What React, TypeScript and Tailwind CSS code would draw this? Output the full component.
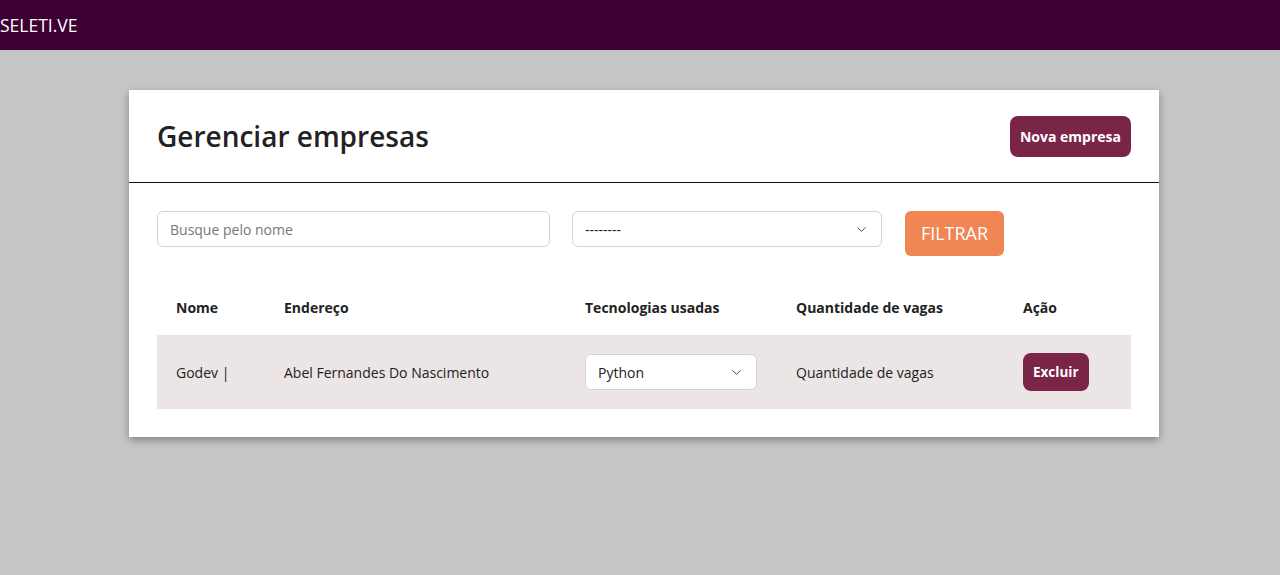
import { ChevronDown } from "lucide-react";

const font = { fontFamily: '"Open Sans", "Noto Sans", sans-serif' };

function Navbar() {
  return (
    <header className="flex h-[50px] items-center bg-[#3c0034]">
      <span className="text-[17.5px] text-white">SELETI.VE</span>
    </header>
  );
}

function FakeSelect({ value, className }: { value: string; className: string }) {
  return (
    <div
      className={`flex h-9 items-center justify-between rounded-md border border-[#d4d4d4] bg-white pl-3 pr-3 text-[14px] text-[#222] ${className}`}
    >
      <span>{value}</span>
      <ChevronDown size={15} strokeWidth={1.6} className="text-[#444]" />
    </div>
  );
}

export default function App() {
  return (
    <div className="min-h-[575px] bg-[#c6c6c6]" style={font}>
      <Navbar />

      <main className="pl-[129px] pt-[40px]">
        <div className="w-[1030px] bg-white shadow-[0_3px_8px_rgba(0,0,0,0.35)]">
          <div className="flex h-[93px] items-center justify-between border-b border-[#111] px-7">
            <h1 className="text-[28px] font-semibold text-[#222]">Gerenciar empresas</h1>
            <button className="h-[41px] rounded-lg bg-[#7a2547] px-[10px] text-[14px] font-bold text-white">
              Nova empresa
            </button>
          </div>

          <div className="px-7 pb-7 pt-[28px]">
            <div className="flex items-start">
              <input
                placeholder="Busque pelo nome"
                className="h-9 w-[393px] rounded-md border border-[#d4d4d4] px-3 text-[14px] text-[#222] placeholder:text-[#777] outline-none"
              />
              <FakeSelect value="--------" className="ml-[22px] w-[310px]" />
              <button className="ml-[23px] h-[45px] w-[99px] rounded-md bg-[#ef8654] text-[18px] text-white">
                FILTRAR
              </button>
            </div>

            <table className="mt-6 w-[974px] border-collapse text-left text-[14px] text-[#222]">
              <thead>
                <tr className="h-[55px]">
                  <th className="w-[108px] pl-[19px] font-bold">Nome</th>
                  <th className="w-[301px] pl-[19px] font-bold">Endereço</th>
                  <th className="w-[211px] pl-[19px] font-bold">Tecnologias usadas</th>
                  <th className="w-[227px] pl-[19px] font-bold">Quantidade de vagas</th>
                  <th className="w-[127px] pl-[19px] font-bold">Ação</th>
                </tr>
              </thead>
              <tbody>
                <tr className="h-[74px] bg-[#ebe5e5]">
                  <td className="pl-[19px]">Godev |</td>
                  <td className="pl-[19px]">Abel Fernandes Do Nascimento</td>
                  <td className="pl-[19px]">
                    <FakeSelect value="Python" className="w-[172px]" />
                  </td>
                  <td className="pl-[19px]">Quantidade de vagas</td>
                  <td className="pl-[19px]">
                    <button className="h-[38px] rounded-lg bg-[#7a2547] px-[10px] text-[13.5px] font-bold text-white">
                      Excluir
                    </button>
                  </td>
                </tr>
              </tbody>
            </table>
          </div>
        </div>
      </main>
    </div>
  );
}
